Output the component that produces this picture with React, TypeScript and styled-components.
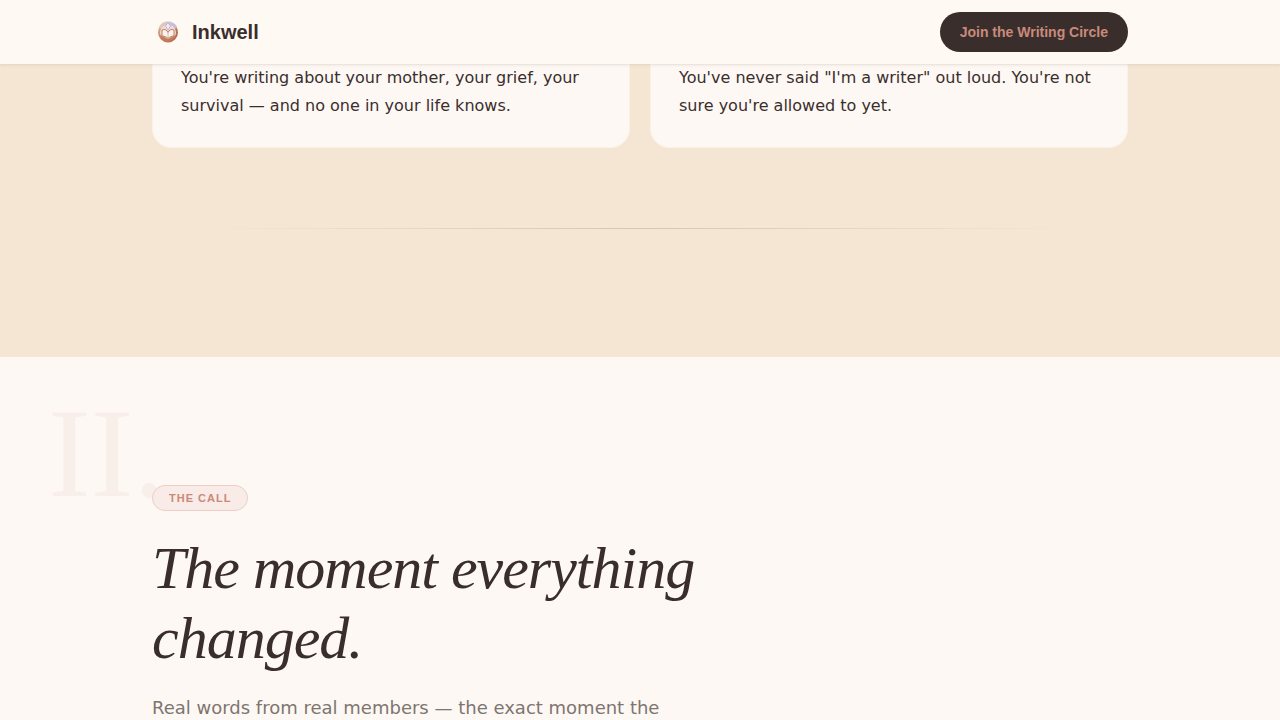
import React from "react";
import styled, { createGlobalStyle } from "styled-components";

const color = {
  ink: "#3a2e2d",
  paper: "#fdf8f4",
  cream: "#f5e6d3",
  clay: "#c98a7a",
  muted: "#7d7570",
};

const sans = `"Liberation Sans", Arial, sans-serif`;
const body = `"DejaVu Sans", Verdana, sans-serif`;
const serif = `"Liberation Serif", "Times New Roman", serif`;

const GlobalStyle = createGlobalStyle`
  *, *::before, *::after { box-sizing: border-box; }
  body {
    margin: 0;
    background: ${color.paper};
    color: ${color.ink};
    font-family: ${body};
    font-size: 16px;
    line-height: 28px;
  }
  h2, p { margin: 0; }
`;

const Container = styled.div`
  width: 100%;
  max-width: 1024px;
  margin: 0 auto;
  padding: 0 24px;
`;

const Header = styled.header`
  position: sticky;
  top: 0;
  z-index: 10;
  background: #fef9f3;
  box-shadow: 0 1px 3px rgba(58, 46, 45, 0.1);
`;

const HeaderRow = styled(Container)`
  display: flex;
  align-items: center;
  justify-content: space-between;
  min-height: 64px;
`;

const Brand = styled.a`
  display: flex;
  align-items: center;
  gap: 8px;
  color: ${color.ink};
  font: 700 20px/28px ${sans};
  text-decoration: none;
`;

const JoinButton = styled.button`
  height: 40px;
  padding: 0 20px;
  border: 0;
  border-radius: 20px;
  background: ${color.ink};
  color: ${color.clay};
  font: 700 14px/20px ${sans};
  cursor: pointer;
`;

const CreamSection = styled.section`
  padding-bottom: 128px;
  background: ${color.cream};
`;

const CardGrid = styled.div`
  display: grid;
  grid-template-columns: repeat(auto-fit, minmax(300px, 1fr));
  gap: 20px;
`;

const Card = styled.article`
  padding: 0 29px 28px;
  border-radius: 0 0 20px 20px;
  background: ${color.paper};
  box-shadow: inset 0 0 0 1px #fbf1e6;
`;

const Divider = styled.hr`
  height: 1px;
  margin: 80px 48px 0;
  border: 0;
  background: linear-gradient(to right, transparent, #d8c5ae, transparent);
`;

const CallSection = styled.section`
  position: relative;
  padding: 128px 0;
`;

const Numeral = styled.span`
  position: absolute;
  top: 32px;
  left: 48px;
  color: rgba(201, 138, 122, 0.08);
  font: 400 128px/128px ${serif};
  pointer-events: none;
`;

const CallContent = styled(Container)`
  position: relative;
  display: flex;
  flex-direction: column;
  align-items: flex-start;
`;

const Badge = styled.span`
  padding: 4px 16px;
  border: 1px solid #ebcfc6;
  border-radius: 13px;
  background: #f9ebe7;
  color: ${color.clay};
  font: 700 11px/16px ${sans};
  letter-spacing: 1px;
  text-transform: uppercase;
`;

const Title = styled.h2`
  max-width: 640px;
  margin-top: 22px;
  font: italic 400 60px/70px ${serif};
  letter-spacing: -1px;
`;

const Lead = styled.p`
  max-width: 520px;
  margin-top: 20px;
  color: ${color.muted};
  font-size: 18px;
  line-height: 30px;
`;

const Logo = () => (
  <svg width="32" height="32" viewBox="0 0 32 32" aria-hidden="true">
    <defs>
      <linearGradient id="seal" x1="0" y1="0" x2="1" y2="1">
        <stop offset="0" stopColor="#d8b5a6" />
        <stop offset="0.45" stopColor="#c98467" />
        <stop offset="1" stopColor="#a9603f" />
      </linearGradient>
      <linearGradient id="sky" x1="0" y1="0" x2="1" y2="0">
        <stop offset="0" stopColor="#e8c9b8" />
        <stop offset="1" stopColor="#c4bde0" />
      </linearGradient>
    </defs>
    <circle cx="16" cy="16.500" r="9" fill="#f0dcd2" stroke="url(#seal)" strokeWidth="2" />
    <path d="M8 12a9 9 0 0 1 16 0" fill="none" stroke="url(#sky)" strokeWidth="3" />
    <path d="M8 19c1.500 5 5 6.500 8 6.500s6.500-1.500 8-6.500l-8 4z" fill="#c27b5c" />
    <path
      d="M10 14c2.500-1 4.800-.3 6 2.500 1.200-2.800 3.500-3.500 6-2.500v6c-2.500 0-4.500 1-6 2.500-1.500-1.500-3.500-2.500-6-2.500z"
      fill="#fdf5f0"
      stroke="#bf7860"
      strokeWidth="1"
    />
    <path d="M16 16.500V22" stroke="#dbb3a2" strokeWidth="1" />
    <path d="M16 6.500l2.500 3.500-2.500 4-2.500-4z" fill="#f1edf7" stroke="#b9b4d8" strokeWidth="1" />
  </svg>
);

const stories = [
  "You're writing about your mother, your grief, your survival — and no one in your life knows.",
  `You've never said "I'm a writer" out loud. You're not sure you're allowed to yet.`,
];

export default function App() {
  return (
    <>
      <GlobalStyle />
      <Header>
        <HeaderRow>
          <Brand href="#">
            <Logo />
            Inkwell
          </Brand>
          <JoinButton type="button">Join the Writing Circle</JoinButton>
        </HeaderRow>
      </Header>
      <main>
        <CreamSection>
          <Container>
            <CardGrid>
              {stories.map((text) => (
                <Card key={text}>
                  <p>{text}</p>
                </Card>
              ))}
            </CardGrid>
            <Divider />
          </Container>
        </CreamSection>
        <CallSection>
          <Numeral aria-hidden="true">II.</Numeral>
          <CallContent>
            <Badge>The Call</Badge>
            <Title>The moment everything changed.</Title>
            <Lead>Real words from real members — the exact moment the</Lead>
          </CallContent>
        </CallSection>
      </main>
    </>
  );
}
